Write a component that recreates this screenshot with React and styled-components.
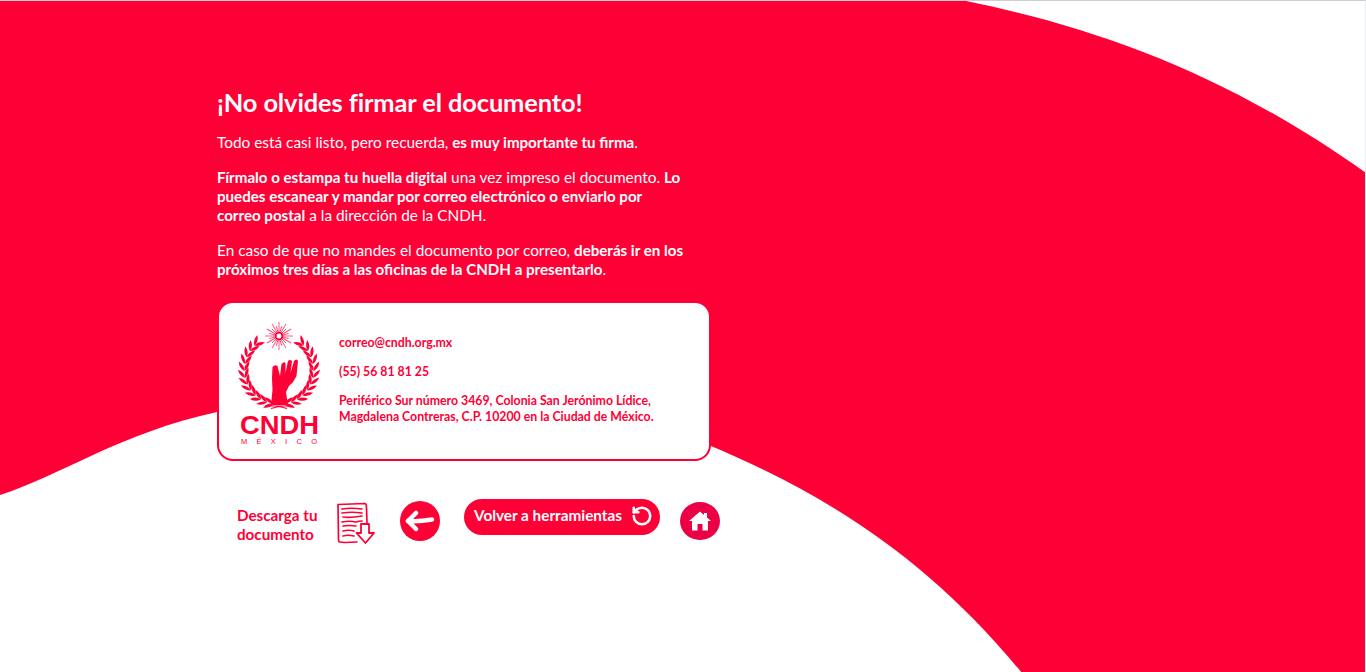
import React from "react";
import styled, { createGlobalStyle } from "styled-components";
import { RotateCcw } from "lucide-react";

const RED = "#ff0036";

const Global = createGlobalStyle`
    html, body {
        margin: 0;
        padding: 0;
        background: #fff;
    }
    body {
        font-family: Lato, "Open Sans", sans-serif;
    }
`;

const Page = styled.div`
    position: relative;
    box-sizing: border-box;
    height: 672px;
    overflow: hidden;
    border-top: 1px solid #cfcfcf;
    border-right: 1px solid #e6f2f2;
`;

const Wave = styled.svg`
    position: absolute;
    left: 0;
    top: 0;
`;

const Content = styled.main`
    position: relative;
    box-sizing: border-box;
    width: 520px;
    margin-left: 217px;
    padding-top: 85px;
`;

const Title = styled.h1`
    margin: 0 0 15px;
    color: #fff;
    font-size: 25.4px;
    line-height: 32px;
    font-weight: 700;
    letter-spacing: -0.1px;
`;

const Text = styled.p`
    width: 468px;
    margin: 0 0 16px;
    color: #fff;
    font-size: 15.4px;
    line-height: 19px;
    font-weight: 400;

    b {
        font-size: 15.12px;
        font-weight: 700;
    }
`;

const Card = styled.section`
    box-sizing: border-box;
    display: flex;
    align-items: flex-start;
    width: 494px;
    height: 160px;
    margin: 22px 0 0;
    padding: 18px 0 0 19px;
    background: #fff;
    border: 2px solid ${RED};
    border-radius: 16px;
`;

const Logo = styled.svg`
    flex: none;
    display: block;
`;

const Contact = styled.div`
    margin-left: 19px;
    padding-top: 14px;
    color: ${RED};
    font-size: 12.3px;
    font-weight: 700;
`;

const ContactLine = styled.div`
    line-height: 16px;
    margin-bottom: ${(p) => p.$gap || 13}px;
`;

const Actions = styled.div`
    display: flex;
    align-items: flex-start;
    margin-top: 40px;
    padding-left: 20px;
`;

const Download = styled.a`
    display: flex;
    align-items: flex-start;
    width: 163px;
    color: ${RED};
`;

const DownloadLabel = styled.span`
    width: 100px;
    margin-top: 5px;
    font-size: 15.2px;
    line-height: 19px;
    font-weight: 700;
`;

const DocSvg = styled.svg`
    flex: none;
    margin-top: 1px;
`;

const RoundButton = styled.button`
    flex: none;
    display: flex;
    align-items: center;
    justify-content: center;
    width: 40px;
    height: ${(p) => p.$h || 40}px;
    margin-top: ${(p) => p.$top || 0}px;
    margin-left: ${(p) => p.$left || 0}px;
    padding: 0;
    border: none;
    border-radius: 50%;
    color: #fff;
    background: ${(p) => p.$bg || RED};
`;

const Pill = styled.button`
    flex: none;
    display: flex;
    align-items: center;
    justify-content: space-between;
    box-sizing: border-box;
    width: 196px;
    height: 36px;
    margin-top: -2px;
    margin-left: 24px;
    padding: 0 7px 0 10px;
    border: none;
    border-radius: 18px;
    color: #fff;
    background: ${RED};
    font-family: inherit;
    font-size: 15.3px;
    font-weight: 700;
`;

const PillLabel = styled.span`
    margin-top: -5px;
`;

const BackIcon = styled(RotateCcw)`
    margin-top: -3px;
`;

// corona de laurel del logo, calculada sobre un arco
const leaves = Array.from({ length: 12 }, (_, i) => {
    const deg = 134 + i * 11.5;
    const a = (deg * Math.PI) / 180;
    const r = 35.5 - i * 0.2;
    return {
        x: 41 + r * Math.cos(a),
        y: 50 - r * Math.sin(a),
        t: 180 - deg,
    };
});

const rays = Array.from({ length: 24 }, (_, i) => (i * 360) / 24);

const LEAF = "M0 0 Q-3.2 -5 0 -11 Q3.2 -5 0 0 Z";

const Branch = () => (
    <g fill={RED}>
        {leaves.map((l, i) => (
            <g key={i} transform={`translate(${l.x} ${l.y}) rotate(${l.t})`}>
                <path d={LEAF} transform="rotate(-30)" />
                <path d={LEAF} transform="rotate(28)" />
            </g>
        ))}
    </g>
);

const CndhLogo = () => (
    <Logo width="82" height="124" viewBox="0 0 82 124">
        <g stroke={RED} strokeWidth="0.9" opacity="0.7">
            {rays.map((r, i) => (
                <line
                    key={r}
                    x1="41"
                    y1={i % 2 ? 5 : 1}
                    x2="41"
                    y2="11"
                    transform={`rotate(${r} 41 15)`}
                />
            ))}
        </g>
        <circle cx="41" cy="15" r="3.4" fill="#fff" stroke={RED} strokeWidth="1.8" />
        <Branch />
        <g transform="matrix(-1 0 0 1 82 0)">
            <Branch />
        </g>
        <path
            d="M33 84 L34.5 69 L34 57 L34.5 46 Q37 43 39.5 45 L42 55 L43.5 43 Q46 40 47.5 42 L47.5 52 L50 40 Q52 38 54 40 L52.5 52 L56 40 Q58.5 37 60 40 L58.5 55 Q56 61 51 65 L48 71 L50 84 Z"
            fill={RED}
        />
        <path d="M27 85 H55 M33 87.5 L41 85.5 L49 87.5" stroke={RED} strokeWidth="1.2" fill="none" />
        <text
            x="2"
            y="113"
            fontFamily="Liberation Sans"
            fontWeight="700"
            fontSize="25"
            textLength="79"
            lengthAdjust="spacingAndGlyphs"
            fill={RED}
        >
            CNDH
        </text>
        <text
            x="3"
            y="123"
            fontFamily="Liberation Sans"
            fontSize="7.5"
            textLength="76"
            fill={RED}
        >
            MÉXICO
        </text>
    </Logo>
);

const DocIcon = () => (
    <DocSvg width="39" height="44" viewBox="1 0 39 44" fill="none" stroke={RED} strokeWidth="1.7" strokeLinecap="round" strokeLinejoin="round">
        <path d="M2 2.5 L29 1.5 Q30.5 2 30.5 5 L31 22 M21 40 L9 40.5 L3.5 40 Q2.5 40 2.5 37 L2 2.5" />
        <path d="M6 7 Q15 5.5 26 7 M6 11 Q16 9.5 26 11 M7 15 Q15 16 26 14 M6 20 Q13 18.5 20 20 Q23 19 26 19 M7 24 Q13 23 20 24 M7 29 Q13 27.5 18 29 M7 34 Q12 32.5 18 34" strokeWidth="1.7" />
        <path d="M25 22 H33 V31 H38 L29.5 41 L20.5 31 H25 Z" fill="#fff" strokeWidth="1.8" />
    </DocSvg>
);

const BackArrow = () => (
    <svg width="32" height="22" viewBox="0 0 32 22" fill="none" stroke="#fff" strokeWidth="4.5" strokeLinecap="round" strokeLinejoin="round">
        <path d="M12 3 L4 11 L12 19" />
        <path d="M4 11 Q14 12 28 9.5" />
    </svg>
);

const HomeIcon = () => (
    <svg width="22" height="20" viewBox="0 0 22 20" fill="#fff">
        <path d="M0 10 L11 0.5 L15 4 V2 H18 V6.5 L22 10 L19 10 V19.5 H13.5 V13 H8.5 V19.5 H3 V10 Z" />
    </svg>
);

const App = () => {
    return (
        <Page>
            <Global />
            <Wave width="1366" height="672" viewBox="0 0 1366 672">
                <path
                    d="M0 0 H966 C1100 27 1230 75 1366 172 V672 H1022 C930 560 830 495 711 445 C560 390 360 380 217 411 C120 432 60 475 0 494 Z"
                    fill={RED}
                />
            </Wave>
            <Content>
                <Title>¡No olvides firmar el documento!</Title>
                <Text>
                    Todo está casi listo, pero recuerda, <b>es muy importante tu firma</b>.
                </Text>
                <Text>
                    <b>Fírmalo o estampa tu huella digital</b> una vez impreso el documento.{" "}
                    <b>Lo puedes escanear y mandar por correo electrónico o enviarlo por correo postal</b> a la
                    dirección de la CNDH.
                </Text>
                <Text>
                    En caso de que no mandes el documento por correo,{" "}
                    <b>deberás ir en los próximos tres días a las oficinas de la CNDH a presentarlo</b>.
                </Text>
                <Card>
                    <CndhLogo />
                    <Contact>
                        <ContactLine>correo@cndh.org.mx</ContactLine>
                        <ContactLine>(55) 56 81 81 25</ContactLine>
                        <ContactLine $gap={0}>
                            Periférico Sur número 3469, Colonia San Jerónimo Lídice,
                            <br />
                            Magdalena Contreras, C.P. 10200 en la Ciudad de México.
                        </ContactLine>
                    </Contact>
                </Card>
                <Actions>
                    <Download>
                        <DownloadLabel>
                            Descarga tu
                            <br />
                            documento
                        </DownloadLabel>
                        <DocIcon />
                    </Download>
                    <RoundButton>
                        <BackArrow />
                    </RoundButton>
                    <Pill>
                        <PillLabel>Volver a herramientas</PillLabel>
                        <BackIcon size={22} strokeWidth={2.8} />
                    </Pill>
                    <RoundButton $bg="#eb0045" $h={38} $left={20} $top={1}>
                        <HomeIcon />
                    </RoundButton>
                </Actions>
            </Content>
        </Page>
    );
};

export default App;
